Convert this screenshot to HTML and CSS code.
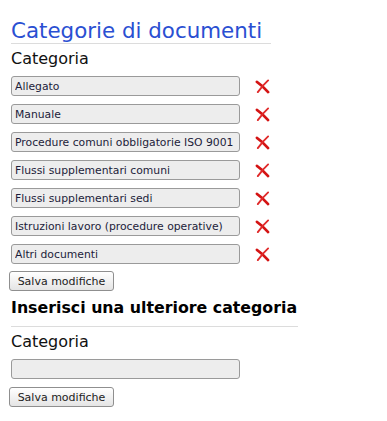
FILE: index.html
```html
<!DOCTYPE html>
<html lang="it">
<head>
  <meta charset="UTF-8" />
  <title>Categorie di documenti</title>
  <link rel="stylesheet" href="styles.css">
</head>
<body>
  <div class="pagina">
    <h1 class="titolo">Categorie di documenti</h1>
    <form class="elenco">
      <label class="etichetta">Categoria</label>
      <div class="righe">
        <div class="riga"><input type="text" value="Allegato" /><a class="elimina" href="#"><svg viewBox="0 0 16 16"><path d="M2 3 Q8 7 14 14" /><path class="sottile" d="M14 1.5 Q8 7 3 14" /></svg></a></div>
        <div class="riga"><input type="text" value="Manuale" /><a class="elimina" href="#"><svg viewBox="0 0 16 16"><path d="M2 3 Q8 7 14 14" /><path class="sottile" d="M14 1.5 Q8 7 3 14" /></svg></a></div>
        <div class="riga"><input type="text" value="Procedure comuni obbligatorie ISO 9001" /><a class="elimina" href="#"><svg viewBox="0 0 16 16"><path d="M2 3 Q8 7 14 14" /><path class="sottile" d="M14 1.5 Q8 7 3 14" /></svg></a></div>
        <div class="riga"><input type="text" value="Flussi supplementari comuni" /><a class="elimina" href="#"><svg viewBox="0 0 16 16"><path d="M2 3 Q8 7 14 14" /><path class="sottile" d="M14 1.5 Q8 7 3 14" /></svg></a></div>
        <div class="riga"><input type="text" value="Flussi supplementari sedi" /><a class="elimina" href="#"><svg viewBox="0 0 16 16"><path d="M2 3 Q8 7 14 14" /><path class="sottile" d="M14 1.5 Q8 7 3 14" /></svg></a></div>
        <div class="riga"><input type="text" value="Istruzioni lavoro (procedure operative)" /><a class="elimina" href="#"><svg viewBox="0 0 16 16"><path d="M2 3 Q8 7 14 14" /><path class="sottile" d="M14 1.5 Q8 7 3 14" /></svg></a></div>
        <div class="riga"><input type="text" value="Altri documenti" /><a class="elimina" href="#"><svg viewBox="0 0 16 16"><path d="M2 3 Q8 7 14 14" /><path class="sottile" d="M14 1.5 Q8 7 3 14" /></svg></a></div>
      </div>
      <button type="button">Salva modifiche</button>
    </form>

    <h2 class="sottotitolo">Inserisci una ulteriore categoria</h2>
    <form class="nuova">
      <label class="etichetta">Categoria</label>
      <div class="righe">
        <div class="riga"><input type="text" value="" /></div>
      </div>
      <button type="button">Salva modifiche</button>
    </form>
  </div>
</body>
</html>
```

FILE: styles.css
```css
body {
  margin: 0;
  background: #fff;
  color: #000;
  font-family: "DejaVu Sans", Verdana, sans-serif;
}
.pagina {
  padding: 18px 0 0 11px;
}
.titolo {
  margin: 0;
  width: 260px;
  font-size: 21.4px;
  font-weight: normal;
  line-height: 25px;
  color: #2a4fd2;
  border-bottom: 1px solid #dcdcdc;
}
.etichetta {
  display: block;
  margin-top: 5px;
  font-size: 16px;
  line-height: 19px;
  color: #111;
}
.righe {
  display: flex;
  flex-direction: column;
  gap: 8px;
  margin-top: 8px;
}
.riga {
  display: flex;
  align-items: center;
}
input {
  box-sizing: border-box;
  width: 229px;
  height: 20px;
  margin: 0;
  padding: 0 3px;
  border: 1px solid #9a9a9a;
  border-radius: 3px;
  background: #ededed;
  font-family: "DejaVu Sans", Verdana, sans-serif;
  font-size: 10.8px;
  color: #1c1c3a;
}
.elimina {
  display: flex;
  margin-left: 15px;
  width: 15px;
  height: 15px;
}
.elimina svg {
  width: 15px;
  height: 15px;
}
.elimina path {
  fill: none;
  stroke: #d41414;
  stroke-width: 2.8;
  stroke-linecap: round;
}
.elimina path.sottile {
  stroke-width: 2;
  stroke: #e02a2a;
}
button {
  display: block;
  box-sizing: border-box;
  width: 105px;
  height: 20px;
  margin: 7px 0 0 -2px;
  padding: 0;
  border: 1px solid #8f8f8f;
  border-radius: 3px;
  background: linear-gradient(#ffffff, #e4e4e4);
  font-family: "DejaVu Sans", Verdana, sans-serif;
  font-size: 11px;
  color: #222;
  cursor: pointer;
}
.sottotitolo {
  margin: 7px 0 0 0;
  width: 287px;
  padding-bottom: 9px;
  font-size: 15.8px;
  font-weight: bold;
  line-height: 19px;
  white-space: nowrap;
  border-bottom: 1px solid #dcdcdc;
}
.nuova button {
  margin-top: 8px;
}
```
